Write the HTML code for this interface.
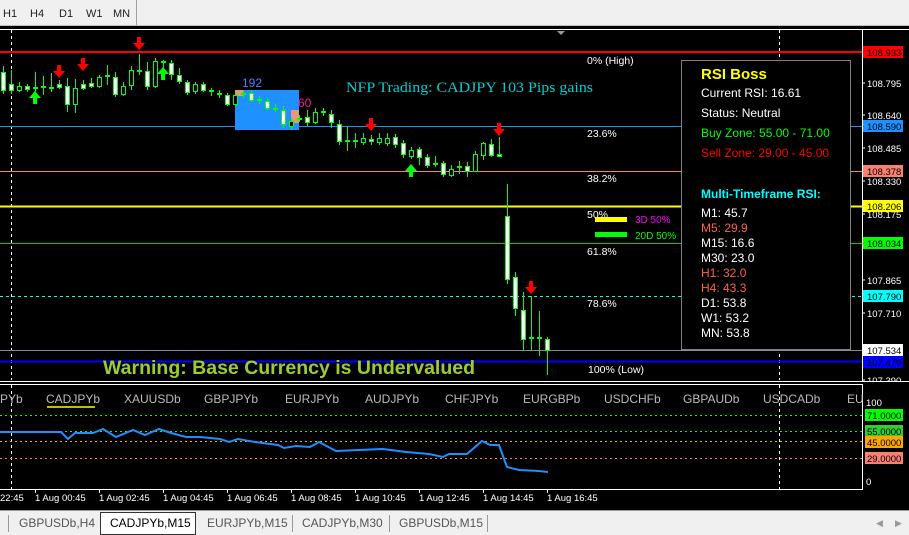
<!DOCTYPE html>
<html><head><meta charset="utf-8"><style>
body{margin:0;width:909px;height:535px;overflow:hidden;background:#000;font-family:"Liberation Sans",sans-serif}
svg{display:block}
</style></head><body>
<svg width="909" height="535" xmlns="http://www.w3.org/2000/svg" font-family="Liberation Sans, sans-serif">
<rect width="909" height="535" fill="#000"/>
<rect x="0" y="0" width="909" height="26" fill="#f0f0f0"/>
<line x1="0" y1="25.5" x2="909" y2="25.5" stroke="#bdbdbd"/>
<line x1="136.5" y1="0" x2="136.5" y2="25" stroke="#a0a0a0"/>
<g font-size="11" fill="#222"><text x="3" y="17">H1</text><text x="30" y="17">H4</text><text x="59" y="17">D1</text><text x="86" y="17">W1</text><text x="113" y="17">MN</text></g>
<line x1="0" y1="29.5" x2="909" y2="29.5" stroke="#fff"/>
<line x1="862.5" y1="30" x2="862.5" y2="490" stroke="#fff"/>
<line x1="11.5" y1="30" x2="11.5" y2="380" stroke="#fff" stroke-dasharray="3,3"/>
<line x1="779.5" y1="30" x2="779.5" y2="380" stroke="#fff" stroke-dasharray="3,3"/>
<path d="M557 31 L565 31 L561 35Z" fill="#999"/>
<line x1="0" y1="52" x2="862" y2="52" stroke="#f00" stroke-width="2"/>
<line x1="0" y1="126.5" x2="862" y2="126.5" stroke="#1e90ff"/>
<line x1="0" y1="171.5" x2="862" y2="171.5" stroke="#fa8072"/>
<line x1="0" y1="206.5" x2="862" y2="206.5" stroke="#ff0" stroke-width="2"/>
<line x1="0" y1="243.5" x2="862" y2="243.5" stroke="#0c0"/>
<line x1="0" y1="296.5" x2="862" y2="296.5" stroke="#0ff" stroke-dasharray="3,3"/>
<line x1="0" y1="350.5" x2="862" y2="350.5" stroke="#889"/>
<line x1="0" y1="361.5" x2="862" y2="361.5" stroke="#00f" stroke-width="2"/>
<rect x="235" y="90" width="64" height="40" fill="#1e90ff"/>
<rect x="235" y="90" width="8" height="6" fill="#e9967a"/>
<rect x="291" y="110" width="8" height="13" fill="#e9967a"/>
<text x="242" y="87" font-size="12" fill="#4d7fff">192</text>
<text x="298" y="107" font-size="12" fill="#ff1493">60</text>
<g stroke="#0f0" stroke-width="1">
<path d="M3.5 66V94M11.5 70V94M19.5 82V92M27.5 84V92M35.5 72V96M43.5 76V95M51.5 73V92M59.5 80V89M67.5 78V112M75.5 79V113M83.5 80V90M91.5 78V88M99.5 75V88M107.5 65V85M115.5 72V97M123.5 82V96M131.5 66V90M139.5 54V75M147.5 62V90M155.5 58V88M163.5 60V70M171.5 60V80M179.5 68V84M187.5 80V95M195.5 82V94M203.5 82V92M211.5 88V96M219.5 90V98M227.5 93V106M235.5 92V106M243.5 90V98M251.5 90V102M259.5 96V104M267.5 98V110M275.5 104V112M283.5 106V128M291.5 118V130M299.5 115V122M307.5 110V126M315.5 108V124M323.5 108V116M331.5 110V128M339.5 120V145M347.5 127V151M355.5 133V148M363.5 133V145M371.5 135V145M379.5 133V145M387.5 133V146M395.5 134V148M403.5 140V158M411.5 147V159M419.5 147V165M427.5 154V168M435.5 156V167M443.5 161V177M451.5 165V177M459.5 161V174M467.5 162V177M475.5 151V171M483.5 142V160M491.5 139V157M499.5 137V157M507.5 184V284M515.5 272V316M523.5 292V350M531.5 296V350M539.5 311V356M547.5 337V375"/>
</g>
<g fill="#fff" stroke="#0f0">
<rect x="1.5" y="72.5" width="4" height="18"/><rect x="9.5" y="84.5" width="4" height="6"/><rect x="25.5" y="86.5" width="4" height="3"/>
<rect x="65.5" y="86.5" width="4" height="18"/><rect x="81.5" y="84.5" width="4" height="4"/><rect x="89.5" y="83.5" width="4" height="3"/>
<rect x="113.5" y="77.5" width="4" height="17"/><rect x="145.5" y="71.5" width="4" height="15"/><rect x="169.5" y="63.5" width="4" height="11"/>
<rect x="177.5" y="75.5" width="4" height="6"/><rect x="185.5" y="82.5" width="4" height="10"/><rect x="201.5" y="84.5" width="4" height="6"/>
<rect x="225.5" y="95.5" width="4" height="9"/><rect x="249.5" y="93.5" width="4" height="7"/><rect x="265.5" y="101.5" width="4" height="7"/>
<rect x="281.5" y="110.5" width="4" height="14"/><rect x="305.5" y="117.5" width="4" height="5"/><rect x="329.5" y="114.5" width="4" height="8"/>
<rect x="337.5" y="124.5" width="4" height="17"/><rect x="369.5" y="139.5" width="4" height="2"/><rect x="393.5" y="137.5" width="4" height="7"/>
<rect x="401.5" y="143.5" width="4" height="11"/><rect x="417.5" y="149.5" width="4" height="8"/><rect x="425.5" y="157.5" width="4" height="8"/>
<rect x="441.5" y="163.5" width="4" height="11"/><rect x="465.5" y="166.5" width="4" height="5"/><rect x="489.5" y="144.5" width="4" height="11"/>
<rect x="505.5" y="216.5" width="4" height="63"/><rect x="513.5" y="277.5" width="4" height="31"/><rect x="521.5" y="310.5" width="4" height="29"/>
<rect x="545.5" y="339.5" width="4" height="11"/><rect x="497.5" y="154.5" width="4" height="2"/><rect x="57.5" y="84.5" width="4" height="3"/>
</g>
<g fill="#000" stroke="#0f0">
<rect x="17.5" y="86.5" width="4" height="4"/><rect x="73.5" y="88.5" width="4" height="16"/><rect x="97.5" y="77.5" width="4" height="9"/>
<rect x="121.5" y="86.5" width="4" height="8"/><rect x="129.5" y="70.5" width="4" height="15"/><rect x="153.5" y="61.5" width="4" height="25"/>
<rect x="193.5" y="84.5" width="4" height="7"/><rect x="233.5" y="95.5" width="4" height="9"/><rect x="289.5" y="121.5" width="4" height="5"/>
<rect x="313.5" y="112.5" width="4" height="10"/><rect x="361.5" y="138.5" width="4" height="4"/><rect x="377.5" y="138.5" width="4" height="4"/>
<rect x="385.5" y="138.5" width="4" height="5"/><rect x="409.5" y="150.5" width="4" height="6"/><rect x="449.5" y="169.5" width="4" height="6"/>
<rect x="473.5" y="154.5" width="4" height="17"/><rect x="481.5" y="143.5" width="4" height="12"/>
</g>
<g stroke="#0f0" stroke-width="2"><path d="M33 88h5M41 87h5M49 88h5M105 76h5M137 71h5M161 62h5M209 91h5M217 94h5M241 94h5M257 100h5M273 109h5M297 119h5M321 112h5M345 141h5M353 141h5M433 164h5M457 167h5M529 338h5M537 338h5"/></g>
<g fill="#f00">
<path d="M-2 -8h4v6h4l-6 7l-6-7h4z" transform="translate(139,45)"/>
<path d="M-2 -8h4v6h4l-6 7l-6-7h4z" transform="translate(59,73)"/>
<path d="M-2 -8h4v6h4l-6 7l-6-7h4z" transform="translate(83,66)"/>
<path d="M-2 -8h4v6h4l-6 7l-6-7h4z" transform="translate(371,126)"/>
<path d="M-2 -8h4v6h4l-6 7l-6-7h4z" transform="translate(499,131)"/>
<path d="M-2 -8h4v6h4l-6 7l-6-7h4z" transform="translate(531,289)"/>
</g>
<g fill="#0f0">
<path d="M-2 8h4v-6h4l-6-7l-6 7h4z" transform="translate(35,96)"/>
<path d="M-2 8h4v-6h4l-6-7l-6 7h4z" transform="translate(163,72)"/>
<path d="M-2 8h4v-6h4l-6-7l-6 7h4z" transform="translate(411,169)"/>
</g>
<text x="346" y="92" font-family="Liberation Serif, serif" font-size="15" fill="#00ced1" textLength="247" lengthAdjust="spacingAndGlyphs">NFP Trading: CADJPY 103 Pips gains</text>
<g font-size="10.5" fill="#fff">
<text x="587" y="64">0% (High)</text><text x="587" y="137">23.6%</text><text x="587" y="182">38.2%</text>
<text x="587" y="218">50%</text><text x="587" y="255">61.8%</text><text x="587" y="307">78.6%</text><text x="588" y="373">100% (Low)</text>
</g>
<rect x="595" y="217" width="32" height="5" fill="#ff0"/>
<text x="635" y="223" font-size="10" fill="#f0f">3D 50%</text>
<rect x="595" y="232" width="32" height="5" fill="#0f0"/>
<text x="635" y="239" font-size="10" fill="#0f0">20D 50%</text>
<text x="103" y="374" font-size="19" font-weight="bold" fill="#9acd32" textLength="372" lengthAdjust="spacingAndGlyphs">Warning: Base Currency is Undervalued</text>
<rect x="681.5" y="60.5" width="169" height="289" fill="#000" stroke="#808080"/>
<text x="701" y="79" font-size="15" font-weight="bold" fill="#ff0">RSI Boss</text>
<g font-size="12">
<text x="701" y="97" fill="#fff">Current RSI: 16.61</text>
<text x="701" y="117" fill="#fff">Status: Neutral</text>
<text x="701" y="137" fill="#0f0">Buy Zone: 55.00 - 71.00</text>
<text x="701" y="157" fill="#f00">Sell Zone: 29.00 - 45.00</text>
<text x="701" y="198" font-weight="bold" fill="#0ff">Multi-Timeframe RSI:</text>
<text x="701" y="217" fill="#fff">M1:  45.7</text>
<text x="701" y="232" fill="#ff6347">M5:  29.9</text>
<text x="701" y="247" fill="#fff">M15: 16.6</text>
<text x="701" y="262" fill="#fff">M30: 23.0</text>
<text x="701" y="277" fill="#ff6347">H1:  32.0</text>
<text x="701" y="292" fill="#ff6347">H4:  43.3</text>
<text x="701" y="307" fill="#fff">D1:  53.8</text>
<text x="701" y="322" fill="#fff">W1:  53.2</text>
<text x="701" y="337" fill="#fff">MN:  53.8</text>
</g>
<g font-size="9.5" fill="#fff">
<g stroke="#fff"><path d="M862 83h3M862 115h3M862 148h3M862 181h3M862 214h3M862 280h3M862 313h3M862 380h3"/></g>
<text x="867" y="87">108.795</text><text x="867" y="119">108.640</text><text x="867" y="152">108.485</text>
<text x="867" y="185">108.330</text><text x="867" y="218">108.175</text><text x="867" y="284">107.865</text>
<text x="867" y="317">107.710</text><text x="867" y="384">107.390</text>
<rect x="863" y="46" width="40" height="12" fill="#f00"/><text x="867" y="56" fill="#000">108.933</text>
<rect x="863" y="120" width="40" height="12" fill="#1e90ff"/><text x="867" y="130" fill="#000">108.590</text>
<rect x="863" y="165" width="40" height="12" fill="#fa8072"/><text x="867" y="175" fill="#000">108.378</text>
<rect x="863" y="200" width="40" height="12" fill="#ff0"/><text x="867" y="210" fill="#000">108.206</text>
<rect x="863" y="237" width="40" height="12" fill="#0f0"/><text x="867" y="247" fill="#000">108.034</text>
<rect x="863" y="290" width="40" height="12" fill="#0ff"/><text x="867" y="300" fill="#000">107.790</text>
<rect x="863" y="344" width="40" height="12" fill="#fff"/><text x="867" y="354" fill="#000">107.534</text>
<rect x="863" y="356" width="40" height="12" fill="#00f"/><text x="867" y="366" fill="#000">107.479</text>
</g>
<line x1="0" y1="381.5" x2="909" y2="381.5" stroke="#fff"/>
<rect x="0" y="382" width="909" height="2" fill="#000"/>
<line x1="0" y1="384.5" x2="862" y2="384.5" stroke="#fff"/>
<line x1="0" y1="489.5" x2="862" y2="489.5" stroke="#fff"/>
<line x1="11.5" y1="385" x2="11.5" y2="489" stroke="#fff" stroke-dasharray="3,3"/>
<line x1="779.5" y1="385" x2="779.5" y2="489" stroke="#fff" stroke-dasharray="3,3"/>
<g font-size="12" fill="#bbb">
<text x="0" y="403">PYb</text><text x="46" y="403">CADJPYb</text><text x="124" y="403">XAUUSDb</text><text x="204" y="403">GBPJPYb</text>
<text x="285" y="403">EURJPYb</text><text x="365" y="403">AUDJPYb</text><text x="445" y="403">CHFJPYb</text><text x="523" y="403">EURGBPb</text>
<text x="604" y="403">USDCHFb</text><text x="683" y="403">GBPAUDb</text><text x="763" y="403">USDCADb</text><text x="847" y="403">EU</text>
</g>
<line x1="47" y1="407" x2="95" y2="407" stroke="#ff0" stroke-width="1.5"/>
<line x1="0" y1="415.5" x2="862" y2="415.5" stroke="#0f0" stroke-dasharray="2,3"/>
<line x1="0" y1="431.5" x2="862" y2="431.5" stroke="#0f0" stroke-dasharray="2,3"/>
<line x1="0" y1="441.5" x2="862" y2="441.5" stroke="#ffa500" stroke-dasharray="2,3"/>
<line x1="0" y1="458.5" x2="862" y2="458.5" stroke="#fa8072" stroke-dasharray="2,3"/>
<polyline fill="none" stroke="#1e90ff" stroke-width="2" points="0,432 61,432 68,439 75,433 93,433 103,429 116,437 133,430 145,435 159,429 171,433 186,437 200,437 220,439 229,442 238,439 255,442 278,445 284,448 296,446 310,447 319,442 336,451 383,449 406,452 429,454 443,457 449,454 467,454 482,441 490,445 499,445 507,467 519,470 539,471 548,472"/>
<g font-size="9.5" fill="#fff">
<text x="866" y="406">100</text><text x="866" y="485">0</text>
<rect x="865" y="409" width="38" height="12" fill="#0f0"/><text x="867" y="419" fill="#000">71.0000</text>
<rect x="865" y="425" width="38" height="12" fill="#3c3"/><text x="867" y="435" fill="#000">55.0000</text>
<rect x="865" y="436" width="38" height="12" fill="#ffa500"/><text x="867" y="446" fill="#000">45.0000</text>
<rect x="865" y="452" width="38" height="12" fill="#fa8072"/><text x="867" y="462" fill="#000">29.0000</text>
</g>
<g stroke="#fff"><path d="M35.5 490v3M99.5 490v3M163.5 490v3M227.5 490v3M291.5 490v3M355.5 490v3M419.5 490v3M483.5 490v3M547.5 490v3"/></g>
<g font-size="9.5" fill="#fff">
<text x="0" y="501">22:45</text><text x="35" y="501">1 Aug 00:45</text><text x="99" y="501">1 Aug 02:45</text><text x="163" y="501">1 Aug 04:45</text>
<text x="227" y="501">1 Aug 06:45</text><text x="291" y="501">1 Aug 08:45</text><text x="355" y="501">1 Aug 10:45</text><text x="419" y="501">1 Aug 12:45</text>
<text x="483" y="501">1 Aug 14:45</text><text x="547" y="501">1 Aug 16:45</text>
</g>
<rect x="0" y="510" width="909" height="25" fill="#f0f0f0"/>
<line x1="0" y1="510.5" x2="909" y2="510.5" stroke="#999"/>
<rect x="100.5" y="512.5" width="95" height="22" fill="#fff" stroke="#333"/>
<g stroke="#999"><path d="M8.5 515v17M292.5 515v17M389.5 515v17M487.5 515v17"/></g>
<g font-size="12" fill="#555">
<text x="19" y="527">GBPUSDb,H4</text><text x="110" y="527" fill="#000">CADJPYb,M15</text><text x="207" y="527">EURJPYb,M15</text>
<text x="302" y="527">CADJPYb,M30</text><text x="399" y="527">GBPUSDb,M15</text>
<text x="876" y="526" font-size="9" fill="#999">◀</text><text x="895" y="526" font-size="9" fill="#999">▶</text>
</g>
</svg>
</body></html>
